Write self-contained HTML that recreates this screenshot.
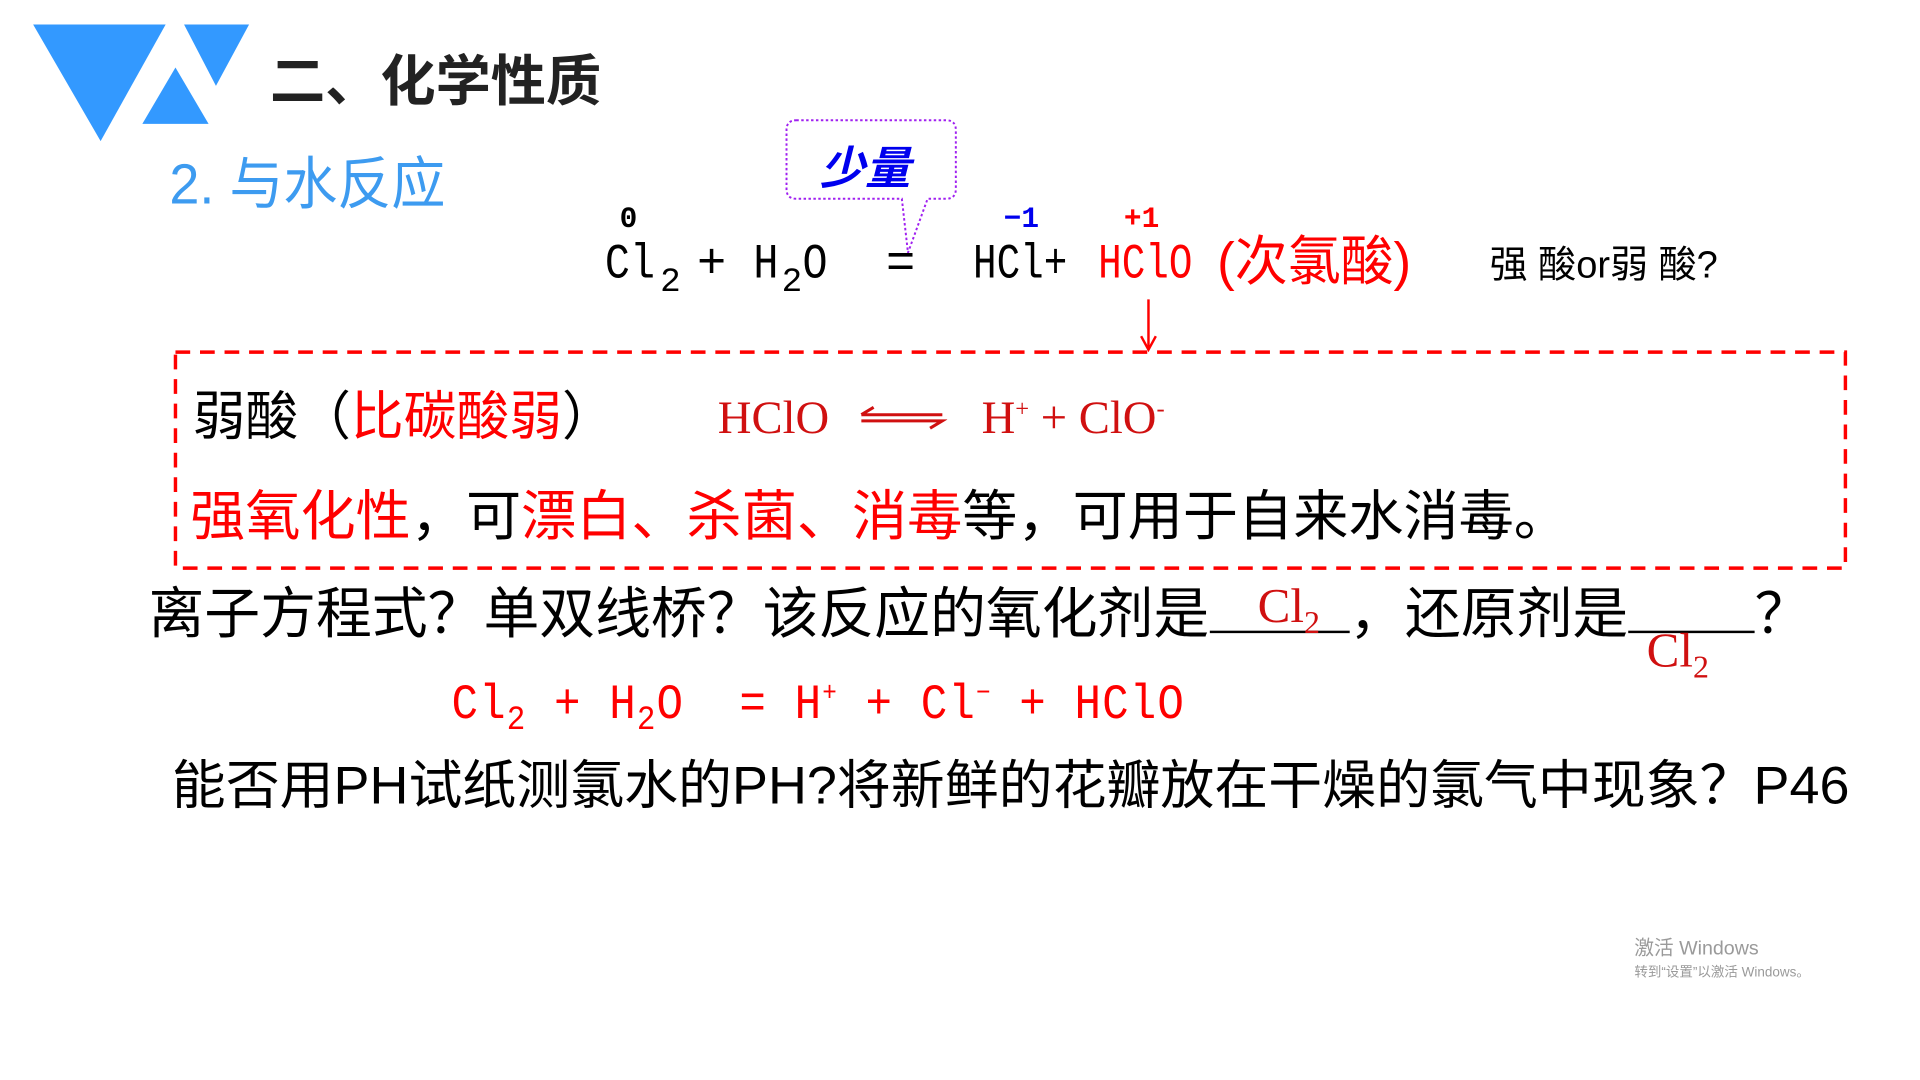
<!DOCTYPE html>
<html><head><meta charset="utf-8"><style>
html,body{margin:0;padding:0;background:#fff;overflow:hidden}
body{width:1920px;height:1080px;position:relative}
#s{position:absolute;left:0;top:0;width:1565px;height:880px;transform:scale(1.227);transform-origin:0 0}
.a{position:absolute;white-space:nowrap;line-height:1}
.cj{font-family:"Liberation Sans","Noto Sans CJK SC",sans-serif}
.m{font-family:"Liberation Mono","DejaVu Sans Mono",monospace}
.r{color:#f00}
.sv{font-family:"Liberation Serif","Noto Serif CJK SC",serif;color:#d01010}
</style></head><body><div id="s">
<svg class="a" style="left:0;top:0" width="260" height="130">
<polygon points="27,20 135,20 82,115" fill="#3399ff"/>
<polygon points="116,101 143,55 170,101" fill="#3399ff"/>
<polygon points="150,20 203,20 176,70" fill="#3399ff"/>
</svg>
<div class="a cj" style="left:220px;top:44px;font-size:45px;font-weight:bold;color:#222">二、化学性质</div>
<div class="a cj" style="left:138px;top:128px;font-size:44px;color:#3d9bf0;transform:scaleY(1.05);transform-origin:0 0">2. 与水反应</div>

<svg class="a" style="left:636px;top:94px" width="150" height="115">
<path d="M13,4 H135 Q143,4 143,12 V60 Q143,68 135,68 H120 L104,112 L99,68 H13 Q5,68 5,60 V12 Q5,4 13,4 Z" fill="none" stroke="#a020f0" stroke-width="1.6" stroke-dasharray="2,2"/>
</svg>
<div class="a cj" style="left:668px;top:119px;font-size:37px;font-weight:bold;font-style:italic;color:#0000ee">少量</div>

<div class="a m" style="left:505px;top:168px;font-size:24px;font-weight:bold">0</div>
<div class="a m" style="left:818px;top:168px;font-size:24px;font-weight:bold;color:#0000ee">−1</div>
<div class="a m" style="left:916px;top:168px;font-size:24px;font-weight:bold;color:#f00">+1</div>

<div class="a m" style="left:493px;top:197px;font-size:40px;transform:scaleX(.85);transform-origin:0 0">Cl</div>
<div class="a m" style="left:538px;top:217px;font-size:28px">2</div>
<div class="a m" style="left:568px;top:197px;font-size:40px">+</div>
<div class="a m" style="left:614px;top:197px;font-size:40px;transform:scaleX(.85);transform-origin:0 0">H</div>
<div class="a m" style="left:637px;top:217px;font-size:28px">2</div>
<div class="a m" style="left:654px;top:197px;font-size:40px;transform:scaleX(.85);transform-origin:0 0">O</div>
<div class="a m" style="left:722px;top:197px;font-size:40px">=</div>
<div class="a m" style="left:793px;top:197px;font-size:40px;transform:scaleX(.8);transform-origin:0 0">HCl+</div>
<div class="a m r" style="left:895px;top:197px;font-size:40px;transform:scaleX(.8);transform-origin:0 0">HClO</div>
<div class="a cj r" style="left:992px;top:192px;font-size:44px;transform:scaleX(.98);transform-origin:0 0">(次氯酸)</div>
<div class="a cj" style="left:1214px;top:200px;font-size:31px">强 酸or弱 酸?</div>

<svg class="a" style="left:925px;top:242px" width="24" height="46">
<line x1="11" y1="2" x2="11" y2="42" stroke="#f00" stroke-width="2"/>
<path d="M5,32 L11,43 L17,32" fill="none" stroke="#f00" stroke-width="2"/>
</svg>

<svg class="a" style="left:140px;top:284px" width="1370" height="184">
<rect x="3" y="3" width="1361" height="176" fill="none" stroke="#f00" stroke-width="2.8" stroke-dasharray="12,8"/>
</svg>

<div class="a cj" style="left:157px;top:319px;font-size:43px">弱酸（<span class="r">比碳酸弱</span>）</div>
<div class="a sv" style="left:585px;top:322px;font-size:38px">HClO</div>
<svg class="a" style="left:698px;top:330px" width="74" height="20"><path d="M4,8 H70 M4,8 L14,2 M4,13 H70 L60,19" fill="none" stroke="#d01010" stroke-width="2.5"/></svg>
<div class="a sv" style="left:800px;top:322px;font-size:38px">H<sup style="font-size:20px">+</sup> + ClO<sup style="font-size:20px">-</sup></div>

<div class="a cj" style="left:155px;top:400px;font-size:44.5px;transform:scaleX(1.01);transform-origin:0 0"><span class="r">强氧化性</span>，可<span class="r">漂白、杀菌、消毒</span>等，可用于自来水消毒。</div>

<div class="a cj" style="left:121px;top:476px;font-size:45.5px">离子方程式？单双线桥？该反应的氧化剂是<span style="display:inline-block;width:114px;border-bottom:2px solid #000;height:38px;vertical-align:baseline"></span>，还原剂是<span style="display:inline-block;width:103px;border-bottom:2px solid #000;height:38px"></span>？</div>
<div class="a sv" style="left:1025px;top:474px;font-size:40px">Cl<sub style="font-size:26px">2</sub></div>
<div class="a sv" style="left:1342px;top:510px;font-size:40px">Cl<sub style="font-size:26px">2</sub></div>

<div class="a m r" style="left:368px;top:555px;font-size:40px;transform:scaleX(.9);transform-origin:0 0;letter-spacing:1px">Cl<sub style="font-size:28px">2</sub> + H<sub style="font-size:28px">2</sub>O &nbsp;= H<sup style="font-size:22px">+</sup> + Cl<sup style="font-size:22px">−</sup> + HClO</div>

<div class="a cj" style="left:140px;top:620px;font-size:43px;transform:scaleX(1.022);transform-origin:0 0">能否用PH试纸测氯水的PH?将新鲜的花瓣放在干燥的氯气中现象？P46</div>

<div class="a cj" style="left:1332px;top:766px;font-size:16px;color:#9a9a9a">激活 Windows</div>
<div class="a cj" style="left:1332px;top:788px;font-size:11px;color:#9a9a9a">转到“设置”以激活 Windows。</div>
</div></body></html>
